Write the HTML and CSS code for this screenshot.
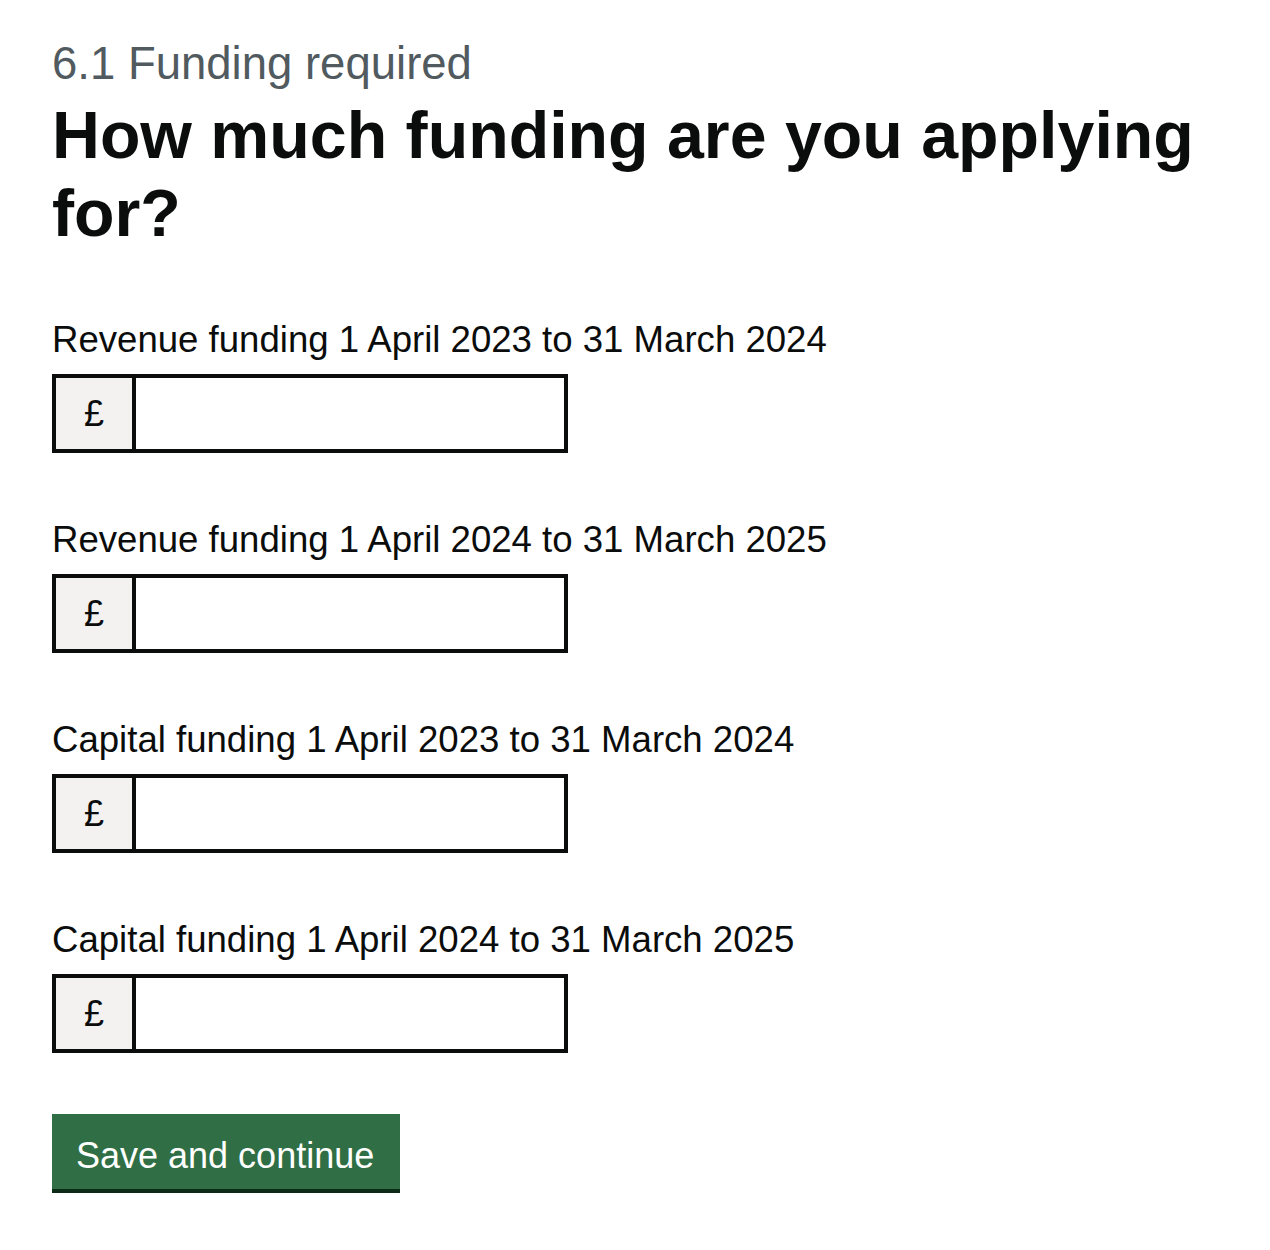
FILE: index.html
```html
<!DOCTYPE html>
<html lang="en">
<head>
<meta charset="utf-8">
<title>How much funding are you applying for?</title>
<link rel="stylesheet" href="styles.css">
</head>
<body>
<main class="main">
  <span class="caption">6.1 Funding required</span>
  <h1 class="heading">How much funding are you applying for?</h1>
  <div class="group">
    <label class="label" for="f1">Revenue funding 1 April 2023 to 31 March 2024</label>
    <div class="wrapper"><div class="prefix">£</div><input class="input" id="f1" type="text"></div>
  </div>
  <div class="group">
    <label class="label" for="f2">Revenue funding 1 April 2024 to 31 March 2025</label>
    <div class="wrapper"><div class="prefix">£</div><input class="input" id="f2" type="text"></div>
  </div>
  <div class="group">
    <label class="label" for="f3">Capital funding 1 April 2023 to 31 March 2024</label>
    <div class="wrapper"><div class="prefix">£</div><input class="input" id="f3" type="text"></div>
  </div>
  <div class="group group-last">
    <label class="label" for="f4">Capital funding 1 April 2024 to 31 March 2025</label>
    <div class="wrapper"><div class="prefix">£</div><input class="input" id="f4" type="text"></div>
  </div>
  <button class="button" type="submit">Save and continue</button>
</main>
</body>
</html>
```
FILE: styles.css
```css
html, body {
  margin: 0;
  padding: 0;
  background: #ffffff;
}
body {
  font-family: "Liberation Sans", Arial, sans-serif;
  color: #0b0c0c;
}
.main {
  padding: 36px 52px 40px;
}
.caption {
  display: block;
  font-size: 45.5px;
  line-height: 56px;
  color: #505a5f;
  margin-bottom: 4px;
}
.heading {
  margin: 0 0 61px;
  font-size: 66.3px;
  line-height: 78px;
  font-weight: 700;
  max-width: 1160px;
}
.group {
  margin-bottom: 60px;
}
.group-last {
  margin-bottom: 61px;
}
.label {
  display: block;
  font-size: 36.6px;
  line-height: 50px;
  padding-top: 2px;
  margin-bottom: 9px;
}
.wrapper {
  display: flex;
  width: 516px;
  height: 79px;
}
.prefix {
  box-sizing: border-box;
  flex: none;
  width: 80px;
  height: 79px;
  border: 4px solid #0b0c0c;
  border-right: 0;
  background: #f3f2f1;
  display: flex;
  align-items: center;
  justify-content: center;
  font-size: 36px;
}
.input {
  box-sizing: border-box;
  flex: 1 1 auto;
  min-width: 0;
  height: 79px;
  border: 4px solid #0b0c0c;
  border-radius: 0;
  margin: 0;
  padding: 8px;
  font: inherit;
  font-size: 36px;
  outline: none;
  background: #fff;
}
.button {
  display: block;
  box-sizing: border-box;
  height: 75px;
  width: 348px;
  margin: 0;
  padding: 9px 24px 0;
  border: 0;
  border-radius: 0;
  background: #306f45;
  box-shadow: 0 4px 0 #0c2a16;
  color: #ffffff;
  font-family: inherit;
  font-size: 36px;
  text-align: left;
  cursor: pointer;
}
```
